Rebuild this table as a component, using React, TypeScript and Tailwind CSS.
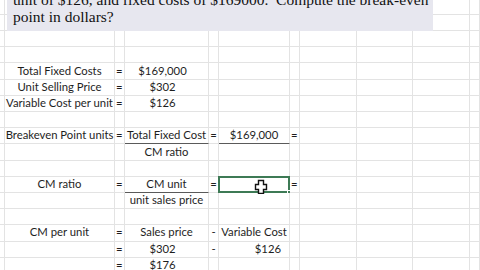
import React from 'react';

type Cell = { t?: string; a?: 'l' | 'c' | 'r'; u?: boolean; sel?: boolean; cls?: string };

// column widths: margin | A | B | C | D | E | F | G | H | I | rest
const COLS = 11;

const row = (cells: Record<number, Cell>): Cell[] =>
  Array.from({ length: COLS }, (_, i) => cells[i] ?? {});

const eq = (cls = ''): Cell => ({ t: '=', a: 'l', cls });

const rows: Cell[][] = [
  row({}),
  row({}),
  row({}),
  row({}),
  row({ 1: { t: 'Total Fixed Costs' }, 2: eq('pl-[1px]'), 3: { t: '$169,000', cls: 'pr-[8px]' } }),
  row({ 1: { t: 'Unit Selling Price' }, 2: eq('pl-[1px]'), 3: { t: '$302', cls: 'pr-[8px]' } }),
  row({ 1: { t: 'Variable Cost per unit' }, 2: eq('pl-[1px]'), 3: { t: '$126', cls: 'pr-[8px]' } }),
  row({}),
  row({
    1: { t: 'Breakeven Point units' },
    2: eq('pl-[1px]'),
    3: { t: 'Total Fixed Cost', u: true },
    4: { t: '=', a: 'c' },
    5: { t: '$169,000', u: true },
    6: eq('pl-[1px]'),
  }),
  row({ 3: { t: 'CM ratio' } }),
  row({}),
  row({
    1: { t: 'CM ratio' },
    2: eq('pl-[1px]'),
    3: { t: 'CM unit', u: true },
    4: { t: '=', a: 'c' },
    5: { sel: true },
    6: eq('pl-[1px]'),
  }),
  row({ 3: { t: 'unit sales price' } }),
  row({}),
  row({
    1: { t: 'CM per unit' },
    2: eq('pl-[1px]'),
    3: { t: 'Sales price' },
    4: { t: '-', a: 'c' },
    5: { t: 'Variable Cost' },
  }),
  row({ 2: eq('pl-[1px]'), 3: { t: '$302', cls: 'pr-[8px]' }, 4: { t: '-', a: 'c' }, 5: { t: '$126', a: 'r', cls: 'pr-[8px]' } }),
  row({ 2: eq('pl-[1px]'), 3: { t: '$176', cls: 'pr-[8px]' } }),
];

const PlusCursor = () => (
  <svg width="14" height="15" viewBox="0 0 14 15" className="absolute left-[34px] top-[1px]">
    <path
      d="M4.5 1.5h5v4h3v5h-3v4h-5v-4h-3v-5h3z"
      fill="#fff"
      stroke="#111"
      strokeWidth="1.4"
      strokeLinejoin="miter"
    />
  </svg>
);

const SheetCell: React.FC<{ c: Cell }> = ({ c }) => {
  const align = c.a === 'l' ? 'justify-start' : c.a === 'r' ? 'justify-end' : 'justify-center';
  return (
    <div
      className={`relative flex items-center whitespace-nowrap border-r border-b border-r-[#e3e3e3] ${
        c.u ? 'border-b-[#5a5a5a]' : 'border-b-[#e3e3e3]'
      } ${align} ${c.cls ?? ''}`}
    >
      {c.t}
      {c.sel && (
        <div className="absolute -left-px -top-px -right-px -bottom-px border-2 border-[#3d7a55]">
          <PlusCursor />
          <div className="absolute -right-[3px] -bottom-[3px] h-[4px] w-[4px] bg-[#3d7a55] border border-white" />
        </div>
      )}
    </div>
  );
};

export default function App() {
  return (
    <div className="relative h-[270px] w-[480px] overflow-hidden bg-white">
      <div className="grid grid-cols-[5px_110px_10px_84px_10px_71px_10px_57px_56px_57px_1fr] grid-rows-[14.9px_repeat(16,16.2px)] font-['Lato','Open_Sans',sans-serif] text-[11.3px] text-[#1e1e1e]">
        {rows.map((r, ri) => r.map((c, ci) => <SheetCell key={`${ri}-${ci}`} c={c} />))}
      </div>

      {/* floating text box over the sheet */}
      <div className="absolute left-[7px] top-0 h-[31px] w-[426px] overflow-hidden bg-[#e7e7ef] pl-[6px] font-['Liberation_Serif',serif] text-[15.5px] leading-[16.5px] text-[#111]">
        <div className="-mt-[8px]">
          <p>unit of $126, and fixed costs of $169000.&nbsp; Compute the break-even</p>
          <p>point in dollars?</p>
        </div>
      </div>
    </div>
  );
}
